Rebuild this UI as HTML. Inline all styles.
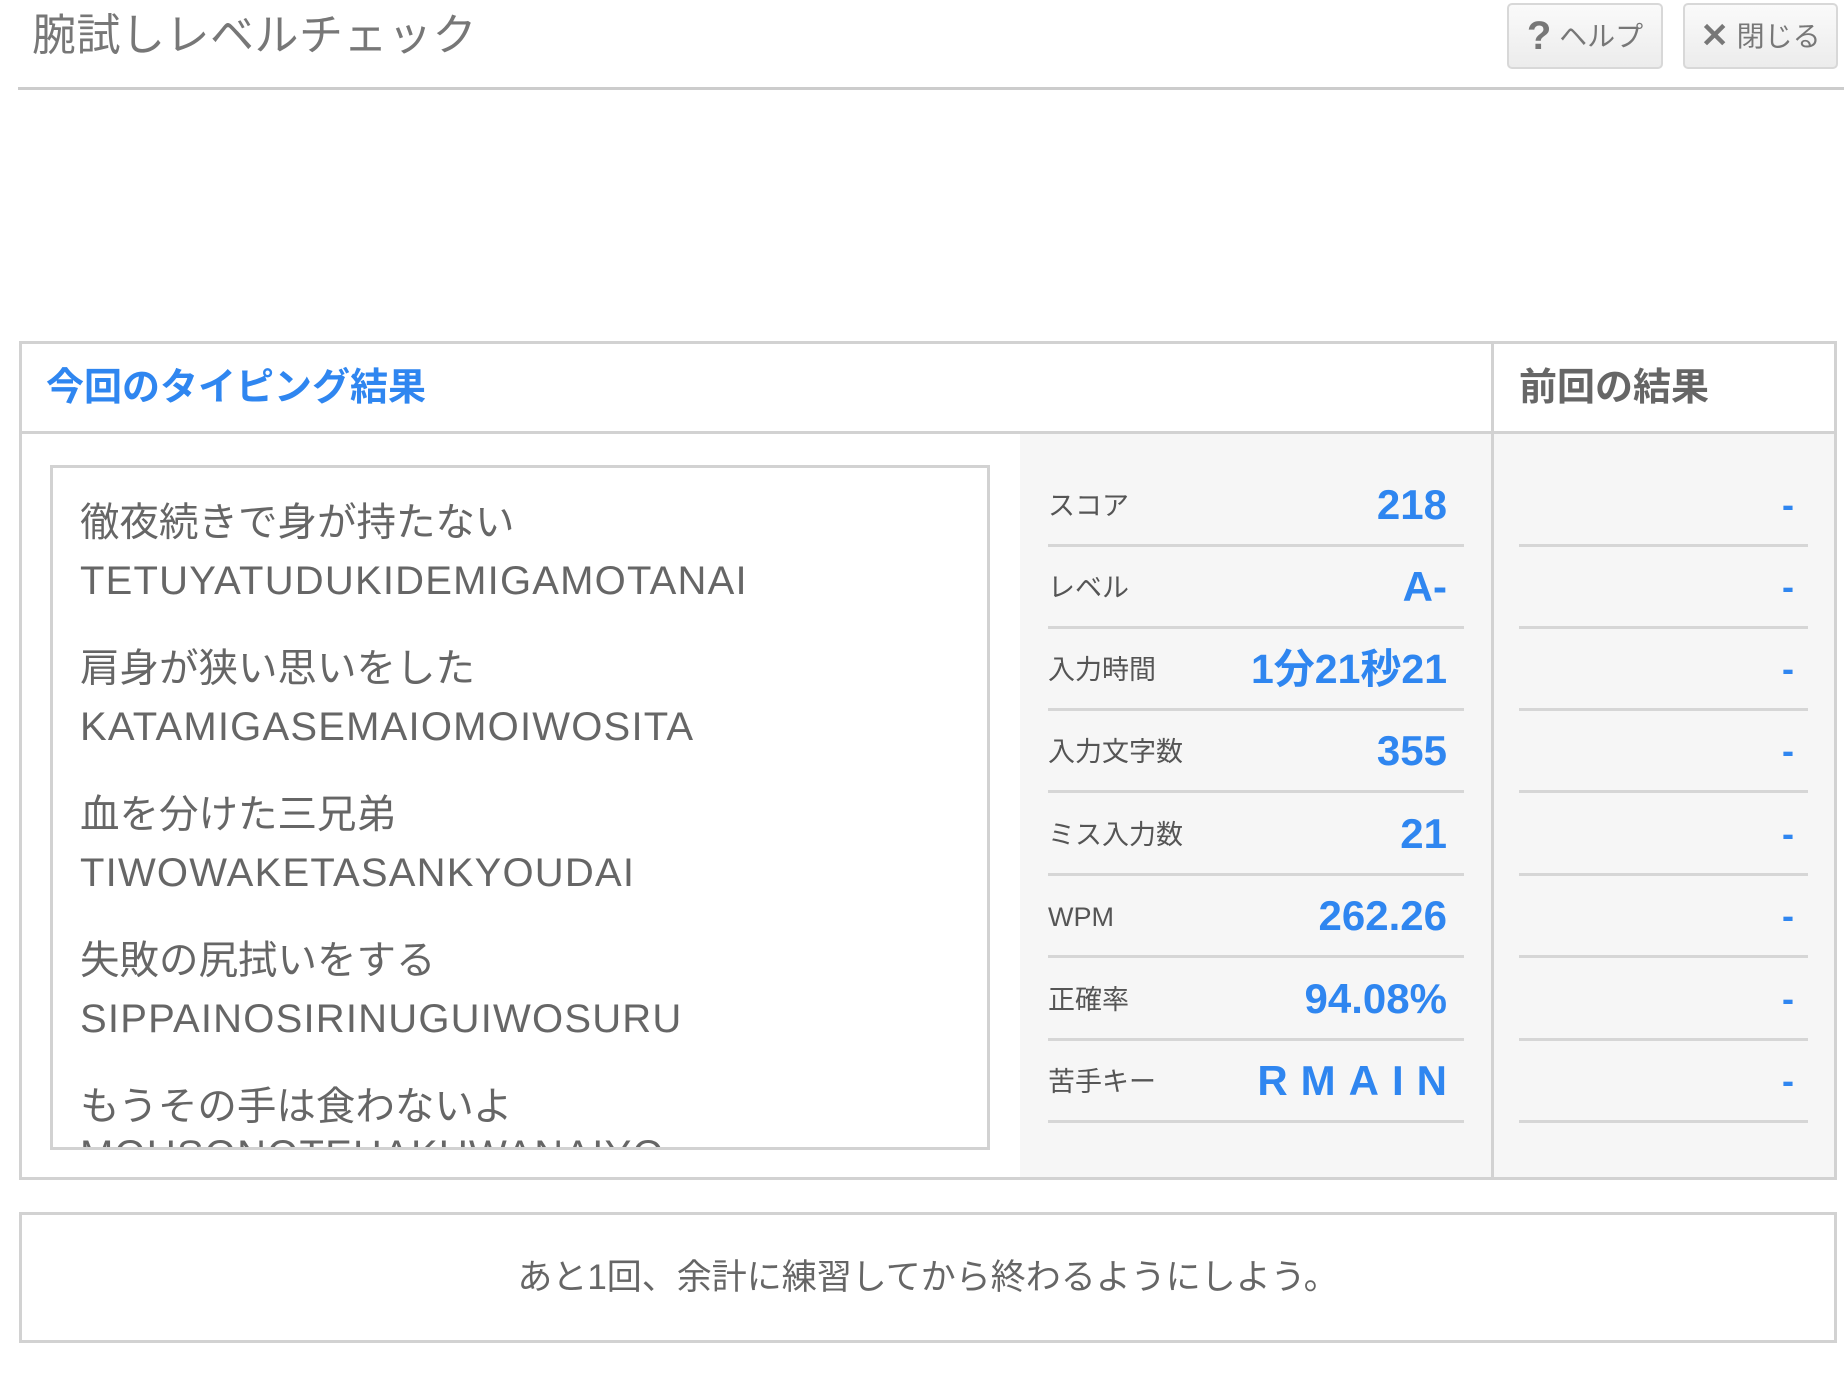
<!DOCTYPE html>
<html><head><meta charset="utf-8">
<style>
*{margin:0;padding:0;box-sizing:border-box}
body{width:1844px;height:1382px;background:#fff;position:relative;overflow:hidden;font-family:"Liberation Sans","Noto Sans CJK JP",sans-serif;color:#555}
.abs{position:absolute}
.title{left:32px;top:8px;font-size:44px;color:#777;line-height:56px;letter-spacing:0.5px}
.hline{left:18px;top:87px;width:1826px;height:3px;background:#ccc}
.btn{top:3px;height:66px;border:2px solid #d8d8d8;border-radius:5px;background:linear-gradient(#fafafa,#ececec);color:#777;font-size:28px;line-height:62px;text-align:center}
.panel{left:19px;top:341px;width:1818px;height:839px;border:3px solid #d2d2d2;z-index:5}
.gray{left:1020px;top:433px;width:817px;height:747px;background:#f6f6f6}
.vdiv{left:1491px;top:341px;width:3px;height:839px;background:#d2d2d2}
.hdiv{left:19px;top:431px;width:1818px;height:3px;background:#d2d2d2}
.h1{left:46px;top:366px;font-size:38px;font-weight:bold;color:#2f86f0;line-height:44px}
.h2{left:1519px;top:366px;font-size:38px;font-weight:bold;color:#666;line-height:44px}
.box{left:50px;top:465px;width:940px;height:685px;border:3px solid #d2d2d2;background:#fff;overflow:hidden}
.box .in{position:absolute;left:27px;top:26px;font-size:39.5px;color:#666;line-height:58px}
.box .r{font-size:40px;letter-spacing:1.2px}
.box .g{margin-bottom:30px}
.row{left:1048px;width:416px;height:82px;border-bottom:3px solid #d6d6d6}
.row .l{position:absolute;left:0;top:0;line-height:82px;font-size:27px;color:#555}
.row .v{position:absolute;right:17px;top:0;line-height:80px;font-size:42px;font-weight:bold;color:#2f86f0}
.prow{left:1519px;width:289px;height:82px;border-bottom:3px solid #d6d6d6}
.prow .v{position:absolute;right:14px;top:0;line-height:80px;font-size:36px;font-weight:bold;color:#2f86f0}
.foot{left:19px;top:1212px;width:1818px;height:131px;border:3px solid #d2d2d2;text-align:center;line-height:125px;font-size:35px;color:#666}
</style></head><body>
<div class="abs title">腕試しレベルチェック</div>
<div class="abs btn" style="left:1507px;width:156px"><span style="font-size:40px;font-weight:bold;vertical-align:-3px">?</span> ヘルプ</div>
<div class="abs btn" style="left:1683px;width:155px"><span style="font-size:34px;font-weight:bold;vertical-align:-1px">✕</span> 閉じる</div>
<div class="abs hline"></div>

<div class="abs panel"></div>
<div class="abs gray"></div>
<div class="abs hdiv"></div>
<div class="abs vdiv"></div>
<div class="abs h1">今回のタイピング結果</div>
<div class="abs h2">前回の結果</div>

<div class="abs box"><div class="in">
<div class="g">徹夜続きで身が持たない<br><span class="r">TETUYATUDUKIDEMIGAMOTANAI</span></div>
<div class="g">肩身が狭い思いをした<br><span class="r">KATAMIGASEMAIOMOIWOSITA</span></div>
<div class="g">血を分けた三兄弟<br><span class="r">TIWOWAKETASANKYOUDAI</span></div>
<div class="g">失敗の尻拭いをする<br><span class="r">SIPPAINOSIRINUGUIWOSURU</span></div>
<div class="g">もうその手は食わないよ<br><span class="r" style="position:relative;top:-10px">MOUSONOTEHAKUWANAIYO</span></div>
</div></div>

<div class="abs row" style="top:465px"><span class="l">スコア</span><span class="v">218</span></div>
<div class="abs row" style="top:547px"><span class="l">レベル</span><span class="v">A-</span></div>
<div class="abs row" style="top:629px"><span class="l">入力時間</span><span class="v" style="font-size:41px">1分21秒21</span></div>
<div class="abs row" style="top:711px"><span class="l">入力文字数</span><span class="v">355</span></div>
<div class="abs row" style="top:794px"><span class="l">ミス入力数</span><span class="v">21</span></div>
<div class="abs row" style="top:876px"><span class="l">WPM</span><span class="v">262.26</span></div>
<div class="abs row" style="top:959px"><span class="l">正確率</span><span class="v">94.08%</span></div>
<div class="abs row" style="top:1041px"><span class="l">苦手キー</span><span class="v" style="letter-spacing:13px;margin-right:-13px">RMAIN</span></div>

<div class="abs prow" style="top:465px"><span class="v">-</span></div>
<div class="abs prow" style="top:547px"><span class="v">-</span></div>
<div class="abs prow" style="top:629px"><span class="v">-</span></div>
<div class="abs prow" style="top:711px"><span class="v">-</span></div>
<div class="abs prow" style="top:794px"><span class="v">-</span></div>
<div class="abs prow" style="top:876px"><span class="v">-</span></div>
<div class="abs prow" style="top:959px"><span class="v">-</span></div>
<div class="abs prow" style="top:1041px"><span class="v">-</span></div>

<div class="abs foot">あと1回、余計に練習してから終わるようにしよう。</div>
</body></html>
